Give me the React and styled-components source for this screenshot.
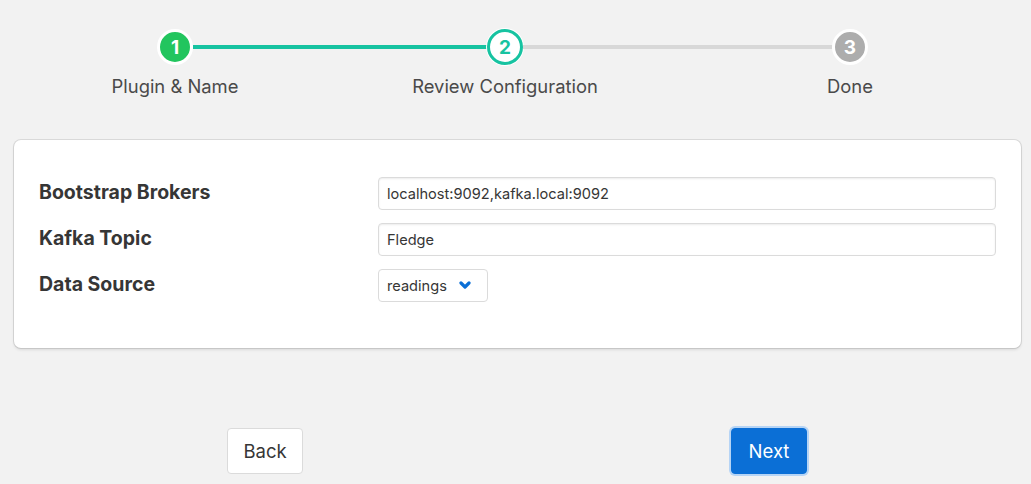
import React from 'react'
import styled, { createGlobalStyle } from 'styled-components'

const GlobalStyle = createGlobalStyle`
  html, body {
    margin: 0;
    padding: 0;
    background: #f2f2f2;
    font-family: Inter, "Noto Sans", sans-serif;
    color: #4a4a4a;
  }
`

const fields = [
  { label: 'Bootstrap Brokers', value: 'localhost:9092,kafka.local:9092' },
  { label: 'Kafka Topic', value: 'Fledge' },
]

function Chevron() {
  return (
    <svg width="12" height="9" viewBox="0 0 12 9">
      <path d="M2 2 L6 6 L10 2" fill="none" stroke="#0b6fd6" strokeWidth="3.2" strokeLinecap="round" strokeLinejoin="round" />
    </svg>
  )
}

export default function App() {
  return (
    <>
      <GlobalStyle />
      <Page>
        <Stepper>
          <Step>
            <Circle $state="done">1</Circle>
            <StepLabel>Plugin & Name</StepLabel>
          </Step>
          <Connector $grow={294} $done />
          <Step>
            <Circle $state="active">2</Circle>
            <StepLabel>Review Configuration</StepLabel>
          </Step>
          <Connector $grow={309} />
          <Step>
            <Circle $state="todo">3</Circle>
            <StepLabel>Done</StepLabel>
          </Step>
        </Stepper>

        <Card>
          {fields.map((f) => (
            <Row key={f.label}>
              <FieldLabel>{f.label}</FieldLabel>
              <Input defaultValue={f.value} />
            </Row>
          ))}
          <Row>
            <FieldLabel>Data Source</FieldLabel>
            <Select>
              <span>readings</span>
              <Chevron />
            </Select>
          </Row>
        </Card>

        <Footer>
          <Button>Back</Button>
          <Button $primary>Next</Button>
        </Footer>
      </Page>
    </>
  )
}

const Page = styled.div`
  width: 1031px;
  height: 484px;
  display: flex;
  flex-direction: column;
  box-sizing: border-box;
  padding-top: 29px;
`

const Stepper = styled.div`
  display: flex;
  align-items: flex-start;
  padding: 0 163px 0 157px;
  height: 111px;
`

const Step = styled.div`
  width: 36px;
  display: flex;
  flex-direction: column;
  align-items: center;
  flex: none;
`

const Circle = styled.div`
  width: 36px;
  height: 36px;
  box-sizing: border-box;
  border-radius: 50%;
  display: flex;
  align-items: center;
  justify-content: center;
  font-size: 19px;
  font-weight: 700;
  border: 3px solid ${(p) => (p.$state === 'active' ? '#17c3a1' : '#ffffff')};
  background: ${(p) =>
    p.$state === 'done' ? '#22c55e' : p.$state === 'active' ? '#ffffff' : '#adadad'};
  color: ${(p) => (p.$state === 'active' ? '#17c3a1' : '#ffffff')};
  box-shadow: ${(p) => (p.$state === 'active' ? '0 0 0 1px #ffffff' : 'none')};
`

const StepLabel = styled.div`
  margin-top: 10px;
  white-space: nowrap;
  font-size: 18.4px;
  color: #4a4a4a;
`

const Connector = styled.div`
  flex: ${(p) => p.$grow} 1 0;
  height: 4px;
  margin-top: 16px;
  background: ${(p) => (p.$done ? '#17c3a1' : '#d8d8d8')};
`

const Card = styled.div`
  margin: 0 10px 0 14px;
  background: #ffffff;
  border-radius: 7px;
  box-shadow: 0 2px 3px rgba(10, 10, 10, 0.1), 0 0 0 1px rgba(10, 10, 10, 0.1);
  padding: 37px 25px 46px 25px;
  display: flex;
  flex-direction: column;
  gap: 13px;
`

const Row = styled.div`
  display: grid;
  grid-template-columns: 339px 1fr;
  align-items: center;
  height: 33px;
`

const FieldLabel = styled.div`
  font-size: 19.5px;
  font-weight: 700;
  color: #363636;
  margin-top: -3px;
`

const Input = styled.input`
  height: 33px;
  box-sizing: border-box;
  border: 1px solid #dbdbdb;
  border-radius: 4px;
  box-shadow: inset 0 1px 2px rgba(10, 10, 10, 0.08);
  padding: 0 8px;
  font-family: inherit;
  font-size: 14.6px;
  color: #363636;
  outline: none;
`

const Select = styled.div`
  width: 110px;
  height: 33px;
  box-sizing: border-box;
  border: 1px solid #dbdbdb;
  border-radius: 4px;
  display: flex;
  align-items: center;
  justify-content: space-between;
  padding: 0 16px 0 8px;
  font-size: 14.6px;
  color: #363636;
`

const Footer = styled.div`
  display: flex;
  justify-content: space-between;
  padding: 0 224px 0 227px;
  margin-top: 80px;
`

const Button = styled.button`
  width: 76px;
  height: 46px;
  box-sizing: border-box;
  border-radius: 4px;
  font-family: inherit;
  font-size: 18.5px;
  border: 1px solid ${(p) => (p.$primary ? '#0b6fd6' : '#dbdbdb')};
  background: ${(p) => (p.$primary ? '#0b6fd6' : '#ffffff')};
  color: ${(p) => (p.$primary ? '#ffffff' : '#363636')};
  box-shadow: ${(p) => (p.$primary ? '0 0 0 2px #b6d4f5' : 'none')};
`
